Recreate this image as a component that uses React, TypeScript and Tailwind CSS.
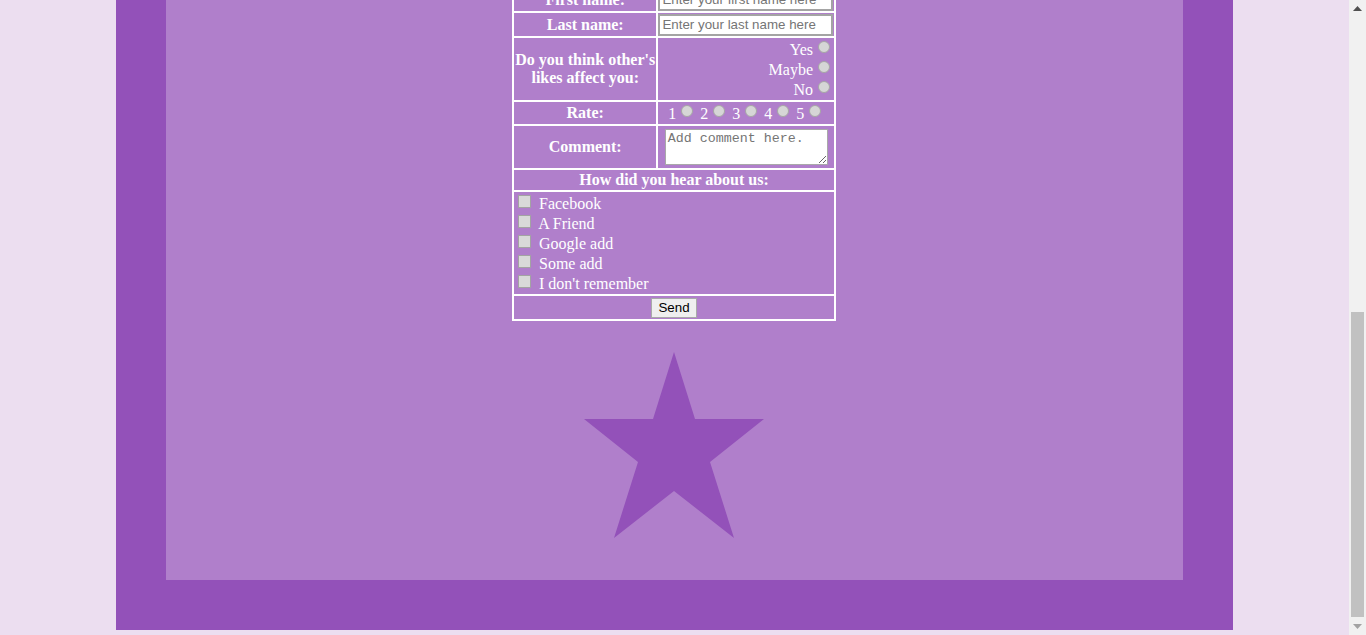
import React from "react";

const serif = "font-['Liberation_Serif','Times_New_Roman',serif]";
const radioClass =
  "appearance-none m-0 ml-[5px] mr-[3px] h-[12px] w-[12px] rounded-full border border-[#a6a6a6] bg-[#d6d6d6] align-[2px]";
const checkClass =
  "appearance-none m-0 ml-[3px] mr-[4px] h-[13px] w-[13px] border border-[#a3a3a3] bg-[#d9d9d9] align-[1px]";

const heardFrom = ["Facebook", "A Friend", "Google add", "Some add", "I don't remember"];
const affectOptions = ["Yes", "Maybe", "No"];

function Star() {
  return (
    <svg width="180" height="186" viewBox="0 0 180 186" className="mt-[31px] mb-[42px] mr-[1px]">
      <polygon
        points="90,0 111,67 180,67 126,110 150,186 90,139 30,186 54,110 0,67 69,67"
        fill="#9351b9"
      />
    </svg>
  );
}

function Scrollbar() {
  return (
    <div className="flex h-[635px] w-[17px] shrink-0 flex-col bg-[#f1f1f1]">
      <div className="flex h-[17px] items-center justify-center">
        <svg width="9" height="5" viewBox="0 0 9 5">
          <polygon points="4.5,0 9,5 0,5" fill="#505050" />
        </svg>
      </div>
      <div className="flex flex-1 flex-col justify-end px-[2px] pb-[1px]">
        <div className="h-[305px] bg-[#c1c1c1]" />
      </div>
      <div className="flex h-[17px] items-center justify-center">
        <svg width="9" height="5" viewBox="0 0 9 5">
          <polygon points="0,0 9,0 4.5,5" fill="#a3a3a3" />
        </svg>
      </div>
    </div>
  );
}

export default function App() {
  const edge = "border-2 border-white";
  const cell = `${edge} p-[1px]`;
  const label = `${cell} text-center font-bold leading-[18px]`;
  const textInput =
    "block h-[22px] w-[175px] border-2 border-[#a4a4a4] bg-white px-[2px] font-['Liberation_Sans',Arial,sans-serif] text-[13.333px] leading-[16px] text-black placeholder:text-[#757575]";

  return (
    <div className="flex h-[635px] w-full overflow-hidden bg-[#ecdef0]">
      <div className="flex-1 overflow-hidden">
        <div className="mx-auto -mt-[14px] w-[1117px] bg-[#9351b9] px-[50px] pb-[50px]">
          <div className={`flex flex-col items-center bg-[#b07fcb] text-[16px] leading-[1.15] text-white ${serif}`}>
            <form className="pr-[1px]">
              <table className="w-[324px] border-collapse border-2 border-white">
                <tbody>
                  <tr>
                    <td className={`${label} h-[25px]`}>First name:</td>
                    <td className={`${edge} p-0`}>
                      <input type="text" placeholder="Enter your first name here" className={textInput} />
                    </td>
                  </tr>
                  <tr>
                    <td className={`${label} h-[25px]`}>Last name:</td>
                    <td className={`${edge} p-0`}>
                      <input type="text" placeholder="Enter your last name here" className={textInput} />
                    </td>
                  </tr>
                  <tr>
                    <td className={`${label} whitespace-nowrap`}>
                      Do you think other's
                      <br />
                      likes affect you:
                    </td>
                    <td className={`${edge} h-[64px] px-[1px] pt-[2px] pb-0 text-right leading-[20px]`}>
                      {affectOptions.map((opt) => (
                        <div key={opt}>
                          {opt}
                          <input type="radio" name="affect" className={radioClass} />
                        </div>
                      ))}
                    </td>
                  </tr>
                  <tr>
                    <td className={`${label} h-[24px]`}>Rate:</td>
                    <td className={`${edge} px-[1px] pt-[2px] pb-0 text-center leading-[18px]`}>
                      {[1, 2, 3, 4, 5].map((n) => (
                        <React.Fragment key={n}>
                          {n}
                          <input type="radio" name="rate" className={radioClass} />{" "}
                        </React.Fragment>
                      ))}
                    </td>
                  </tr>
                  <tr>
                    <td className={label}>Comment:</td>
                    <td className={`${cell} h-[44px] text-center`}>
                      <textarea
                        placeholder="Add comment here."
                        className="h-[36px] w-[163px] border border-[#a9a9a9] bg-white px-[2px] py-[1px] align-middle font-['Liberation_Mono','Courier_New',monospace] text-[13.333px] leading-[15px] text-black placeholder:text-[#757575]"
                      />
                    </td>
                  </tr>
                  <tr>
                    <td colSpan={2} className={`${label} h-[22px]`}>
                      How did you hear about us:
                    </td>
                  </tr>
                  <tr>
                    <td colSpan={2} className={`${edge} h-[104px] px-[1px] pt-[2px] pb-0 leading-[20px]`}>
                      {heardFrom.map((item) => (
                        <div key={item}>
                          <input type="checkbox" className={checkClass} /> {item}
                        </div>
                      ))}
                    </td>
                  </tr>
                  <tr>
                    <td colSpan={2} className={`${cell} h-[25px] text-center`}>
                      <button
                        type="button"
                        className="h-[20px] border border-[#a9a9a9] bg-[#efefef] px-[6px] align-middle font-['Liberation_Sans',Arial,sans-serif] text-[13.333px] leading-[16px] text-black"
                      >
                        Send
                      </button>
                    </td>
                  </tr>
                </tbody>
              </table>
            </form>
            <Star />
          </div>
        </div>
      </div>
      <Scrollbar />
    </div>
  );
}
